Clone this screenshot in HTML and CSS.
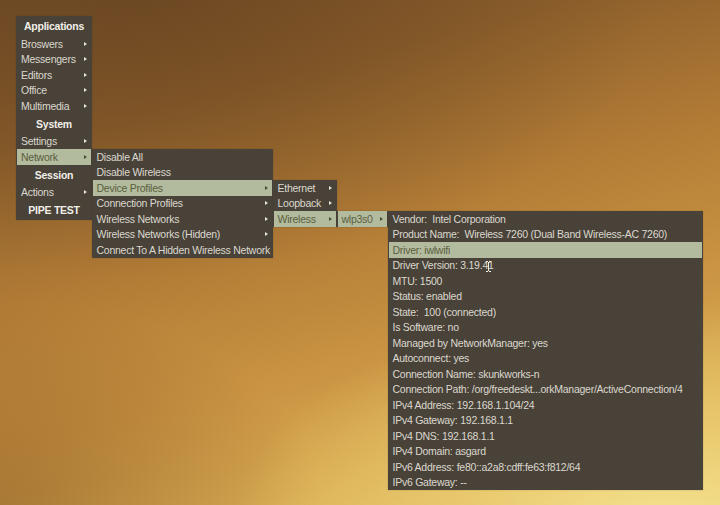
FILE: index.html
```html
<!DOCTYPE html>
<html>
<head>
<meta charset="utf-8">
<link rel="stylesheet" href="styles.css">
</head>
<body>
<div class="desktop">
  <div class="menu menu-main">
    <div class="header">Applications</div>
    <div class="item sub">Broswers</div>
    <div class="item sub">Messengers</div>
    <div class="item sub">Editors</div>
    <div class="item sub">Office</div>
    <div class="item sub">Multimedia</div>
    <div class="header">System</div>
    <div class="item sub">Settings</div>
    <div class="item sub active">Network</div>
    <div class="header">Session</div>
    <div class="item sub">Actions</div>
    <div class="header">PIPE TEST</div>
  </div>

  <div class="menu menu-network">
    <div class="item">Disable All</div>
    <div class="item">Disable Wireless</div>
    <div class="item sub active">Device Profiles</div>
    <div class="item sub">Connection Profiles</div>
    <div class="item sub">Wireless Networks</div>
    <div class="item sub">Wireless Networks (Hidden)</div>
    <div class="item">Connect To A Hidden Wireless Network</div>
  </div>

  <div class="menu menu-device">
    <div class="item sub">Ethernet</div>
    <div class="item sub">Loopback</div>
    <div class="item sub active">Wireless</div>
  </div>

  <div class="menu menu-iface">
    <div class="item sub active">wlp3s0</div>
  </div>

  <div class="menu menu-info">
    <div class="item">Vendor:  Intel Corporation</div>
    <div class="item">Product Name:  Wireless 7260 (Dual Band Wireless-AC 7260)</div>
    <div class="item active">Driver: iwlwifi</div>
    <div class="item">Driver Version: 3.19.41</div>
    <div class="item">MTU: 1500</div>
    <div class="item">Status: enabled</div>
    <div class="item">State:  100 (connected)</div>
    <div class="item">Is Software: no</div>
    <div class="item">Managed by NetworkManager: yes</div>
    <div class="item">Autoconnect: yes</div>
    <div class="item">Connection Name: skunkworks-n</div>
    <div class="item">Connection Path: /org/freedeskt...orkManager/ActiveConnection/4</div>
    <div class="item">IPv4 Address: 192.168.1.104/24</div>
    <div class="item">IPv4 Gateway: 192.168.1.1</div>
    <div class="item">IPv4 DNS: 192.168.1.1</div>
    <div class="item">IPv4 Domain: asgard</div>
    <div class="item">IPv6 Address: fe80::a2a8:cdff:fe63:f812/64</div>
    <div class="item">IPv6 Gateway: --</div>
  </div>

  <svg class="ibeam" width="7" height="11" viewBox="0 0 7 11">
    <path d="M1 0.5h2M4 0.5h2M3.5 1v9M1 10.5h2M4 10.5h2" stroke="#f4f0e6" stroke-width="1" fill="none"/>
  </svg>
</div>
</body>
</html>
```

FILE: styles.css
```css
html, body {
  margin: 0;
  padding: 0;
}

body {
  width: 720px;
  height: 505px;
  overflow: hidden;
  font-family: "Liberation Sans", Arial, sans-serif;
}

.desktop {
  position: relative;
  width: 720px;
  height: 505px;
  background:
    radial-gradient(ellipse 60% 45% at 92% 105%, rgba(246, 228, 146, 0.95) 0%, rgba(238, 210, 118, 0.7) 45%, rgba(226, 180, 86, 0) 100%),
    radial-gradient(ellipse 45% 40% at 0% 100%, rgba(120, 76, 30, 0.45) 0%, rgba(120, 76, 30, 0) 100%),
    radial-gradient(ellipse 70% 55% at 20% 0%, rgba(96, 62, 28, 0.55) 0%, rgba(96, 62, 28, 0) 100%),
    linear-gradient(165deg, #76502a 0%, #8e602c 22%, #b27c36 45%, #c99342 65%, #d9ab52 82%, #e6c46a 100%);
}

.menu {
  position: absolute;
  display: flex;
  flex-direction: column;
  background: #484238;
  padding: 0 1px;
  box-sizing: border-box;
  font-size: 10.5px;
  letter-spacing: -0.25px;
  color: #dcd8cf;
  box-shadow: 0 0 1px rgba(40, 30, 20, 0.4);
}

.menu-main    { left: 16px;  top: 16px;  width: 76px; }
.menu-network { left: 92px;  top: 149px; width: 181px; }
.menu-device  { left: 273px; top: 180px; width: 64px; }
.menu-iface   { left: 337px; top: 211px; width: 51px; }
.menu-info    { left: 388px; top: 211px; width: 315px; }

.header {
  height: 20px;
  display: flex;
  align-items: center;
  justify-content: center;
  font-weight: bold;
  color: #f2efe8;
}

.item {
  height: 15.5px;
  display: flex;
  align-items: center;
  justify-content: space-between;
  padding: 0 4px 0 3.5px;
  white-space: pre;
}

.menu-main .item {
  padding-left: 4px;
}

.item.sub::after {
  content: "";
  width: 0;
  height: 0;
  border-left: 3px solid #e8e4dc;
  border-top: 2.5px solid transparent;
  border-bottom: 2.5px solid transparent;
  flex: none;
}

.item.active {
  background: #b3bb9f;
  color: #5a5e3c;
}

.item.active.sub::after {
  border-left-color: #4c5032;
}

.ibeam {
  position: absolute;
  left: 485px;
  top: 261px;
}
```
